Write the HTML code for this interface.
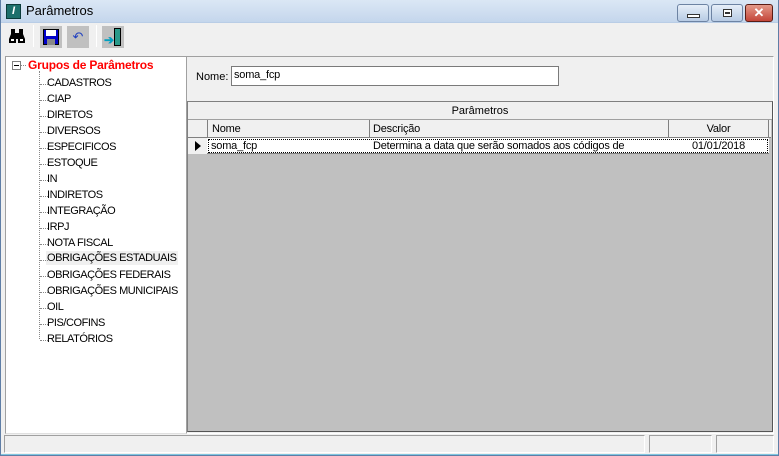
<!DOCTYPE html>
<html><head><meta charset="utf-8"><style>
*{margin:0;padding:0;box-sizing:border-box}
body{width:779px;height:456px;overflow:hidden;background:#f0f0f0;font-family:"Liberation Sans",Tahoma,sans-serif;font-size:11px;color:#000;position:relative}
.a{position:absolute}
#title{left:0;top:0;width:779px;height:23px;background:linear-gradient(#dbe7f5,#c4d6ec);border-bottom:1px solid #b9cde6}
#frame{left:0;top:0;width:779px;height:456px;border:1px solid #5f7ea6;border-top:none;pointer-events:none}
.tb{height:18px;top:4px;border:1px solid #6d83a3;border-radius:3px;background:linear-gradient(#e6eef8,#b7cbe4)}
.tree div{position:absolute;left:0;white-space:nowrap;letter-spacing:-0.45px}
.dot{position:absolute;border-top:1px dotted #888;width:8px}
.cell{position:absolute;white-space:nowrap;overflow:hidden;letter-spacing:-0.2px}
</style></head><body>
<div id="title" class="a"></div>
<div class="a" style="left:6px;top:4px;width:15px;height:15px;background:#1d6f6b;border:1px solid #0b3b39;color:#fff;font-weight:bold;font-style:italic;font-size:11px;line-height:13px;text-align:center">I</div>
<div class="a" style="left:26px;top:3px;font-size:13px">Parâmetros</div>
<div class="a tb" style="left:677px;width:32px"><div class="a" style="left:9px;top:9px;width:13px;height:4px;background:#fff;border:1px solid #333"></div></div>
<div class="a tb" style="left:711px;width:32px"><div class="a" style="left:11px;top:4px;width:9px;height:8px;border:1px solid #333;background:#fff"></div><div class="a" style="left:13px;top:7px;width:5px;height:2px;background:#333"></div></div>
<div class="a" style="left:745px;top:4px;width:28px;height:18px;border:1px solid #5a1c14;border-radius:3px;background:linear-gradient(#e49a8a,#c4463a);color:#fff;font-weight:bold;font-size:13px;text-align:center;line-height:15px">✕</div>
<!-- toolbar -->
<svg class="a" style="left:8px;top:28px" width="18" height="16" viewBox="0 0 18 16"><path d="M3 1h4v4h4V1h4v5l2 5v4h-7v-4H8v4H1v-4l2-5z" fill="#000"/><rect x="3" y="11" width="3" height="2" fill="#fff"/><rect x="12" y="11" width="3" height="2" fill="#fff"/></svg>
<div class="a" style="left:33px;top:25px;width:1px;height:22px;background:#aaa;border-right:1px solid #fff"></div>
<div class="a" style="left:40px;top:26px;width:22px;height:22px;background:#c0c0c0"></div>
<div class="a" style="left:43px;top:29px;width:16px;height:16px;background:#0000c8;border:1px solid #000"><div class="a" style="left:2px;top:0;width:10px;height:6px;background:#fff"></div><div class="a" style="left:3px;top:9px;width:8px;height:6px;background:#888"></div></div>
<div class="a" style="left:67px;top:26px;width:22px;height:22px;background:#c0c0c0;color:#2040c0;font-size:13px;text-align:center;line-height:22px">↶</div>
<div class="a" style="left:96px;top:25px;width:1px;height:22px;background:#aaa;border-right:1px solid #fff"></div>
<div class="a" style="left:102px;top:26px;width:22px;height:22px;background:#c0c0c0"><div class="a" style="left:12px;top:2px;width:7px;height:18px;background:#2a9a8a;border:1px solid #000"></div><div class="a" style="left:2px;top:7px;color:#00a0c0;font-size:12px;font-weight:bold">➔</div></div>
<!-- tree -->
<div class="a" style="left:5px;top:56px;width:182px;height:378px;background:#fff;border:1px solid #a0a0a0;border-right-color:#fff;border-bottom-color:#e0e0e0"></div>
<div class="a" style="left:12px;top:61px;width:9px;height:9px;border:1px solid #808080;background:#fff"><div class="a" style="left:1px;top:3px;width:5px;height:1px;background:#000"></div></div>
<div class="a" style="left:21px;top:65px;width:5px;border-top:1px dotted #888"></div>
<div class="a" style="left:28px;top:58px;color:#f00;font-weight:bold;font-size:12px;letter-spacing:-0.2px">Grupos de Parâmetros</div>
<div class="a" style="left:39px;top:71px;height:268px;border-left:1px dotted #888"></div>
<div class="a tree" style="left:40px;top:2px">
<div style="top:75px"><span class="dot" style="left:0;top:7px"></span><span style="margin-left:7px">CADASTROS</span></div>
<div style="top:91px"><span class="dot" style="left:0;top:7px"></span><span style="margin-left:7px">CIAP</span></div>
<div style="top:107px"><span class="dot" style="left:0;top:7px"></span><span style="margin-left:7px">DIRETOS</span></div>
<div style="top:123px"><span class="dot" style="left:0;top:7px"></span><span style="margin-left:7px">DIVERSOS</span></div>
<div style="top:139px"><span class="dot" style="left:0;top:7px"></span><span style="margin-left:7px">ESPECIFICOS</span></div>
<div style="top:155px"><span class="dot" style="left:0;top:7px"></span><span style="margin-left:7px">ESTOQUE</span></div>
<div style="top:171px"><span class="dot" style="left:0;top:7px"></span><span style="margin-left:7px">IN</span></div>
<div style="top:187px"><span class="dot" style="left:0;top:7px"></span><span style="margin-left:7px">INDIRETOS</span></div>
<div style="top:203px"><span class="dot" style="left:0;top:7px"></span><span style="margin-left:7px">INTEGRAÇÃO</span></div>
<div style="top:219px"><span class="dot" style="left:0;top:7px"></span><span style="margin-left:7px">IRPJ</span></div>
<div style="top:235px"><span class="dot" style="left:0;top:7px"></span><span style="margin-left:7px">NOTA FISCAL</span></div>
<div style="top:250px"><span class="dot" style="left:0;top:8px"></span><span style="margin-left:6px;background:#f0f0f0;padding:1px 1px">OBRIGAÇÕES ESTADUAIS</span></div>
<div style="top:267px"><span class="dot" style="left:0;top:7px"></span><span style="margin-left:7px">OBRIGAÇÕES FEDERAIS</span></div>
<div style="top:283px"><span class="dot" style="left:0;top:7px"></span><span style="margin-left:7px">OBRIGAÇÕES MUNICIPAIS</span></div>
<div style="top:299px"><span class="dot" style="left:0;top:7px"></span><span style="margin-left:7px">OIL</span></div>
<div style="top:315px"><span class="dot" style="left:0;top:7px"></span><span style="margin-left:7px">PIS/COFINS</span></div>
<div style="top:331px"><span class="dot" style="left:0;top:7px"></span><span style="margin-left:7px">RELATÓRIOS</span></div>
</div>
<!-- right panel -->
<div class="a" style="left:186px;top:56px;width:588px;height:378px;border:1px solid #a0a0a0;border-right-color:#fff;border-bottom-color:#fff"></div>
<div class="a" style="left:196px;top:71px;font-size:11px">Nome:</div>
<div class="a" style="left:231px;top:66px;width:328px;height:20px;background:#fff;border:1px solid #7a7a7a;padding:2px 2px;letter-spacing:-0.2px">soma_fcp</div>
<div class="a" style="left:187px;top:101px;width:586px;height:331px;background:#c0c0c0;border:1px solid #808080;border-bottom-color:#555;border-right-color:#555"></div>
<div class="a" style="left:188px;top:102px;width:584px;height:18px;background:#f0f0f0;border-bottom:1px solid #a0a0a0;text-align:center;line-height:18px">Parâmetros</div>
<div class="a" style="left:188px;top:120px;width:583px;height:18px;background:#f0f0f0;border-bottom:1px solid #808080"></div>
<div class="cell" style="left:207px;top:120px;width:1px;height:34px;background:#808080"></div>
<div class="cell" style="left:369px;top:120px;width:1px;height:34px;background:#808080"></div>
<div class="cell" style="left:668px;top:120px;width:1px;height:34px;background:#808080"></div>
<div class="cell" style="left:768px;top:120px;width:1px;height:34px;background:#808080"></div>
<div class="cell" style="left:212px;top:123px">Nome</div>
<div class="cell" style="left:373px;top:123px">Descrição</div>
<div class="cell" style="left:669px;top:123px;width:99px;text-align:center">Valor</div>
<div class="a" style="left:188px;top:138px;width:581px;height:16px;background:#fff;border-bottom:1px solid #808080"></div>
<div class="a" style="left:188px;top:138px;width:19px;height:16px;background:#f0f0f0"></div>
<div class="a" style="left:195px;top:141px;width:0;height:0;border-left:6px solid #000;border-top:5px solid transparent;border-bottom:5px solid transparent"></div>
<div class="a" style="left:208px;top:139px;width:560px;height:14px;border:1px dotted #000"></div>
<div class="cell" style="left:211px;top:140px">soma_fcp</div>
<div class="cell" style="left:373px;top:140px;width:294px">Determina a data que serão somados aos códigos de</div>
<div class="cell" style="left:669px;top:140px;width:99px;text-align:center">01/01/2018</div>
<!-- status -->
<div class="a" style="left:4px;top:435px;width:641px;height:18px;border:1px solid #a0a0a0;border-right-color:#fff;border-bottom-color:#fff"></div>
<div class="a" style="left:649px;top:435px;width:63px;height:18px;border:1px solid #a0a0a0;border-right-color:#fff;border-bottom-color:#fff"></div>
<div class="a" style="left:716px;top:435px;width:58px;height:18px;border:1px solid #a0a0a0;border-right-color:#fff;border-bottom-color:#fff"></div>
<div class="a" style="left:0;top:454px;width:779px;height:2px;background:#7fc6e0"></div>
<div id="frame" class="a"></div>
</body></html>
